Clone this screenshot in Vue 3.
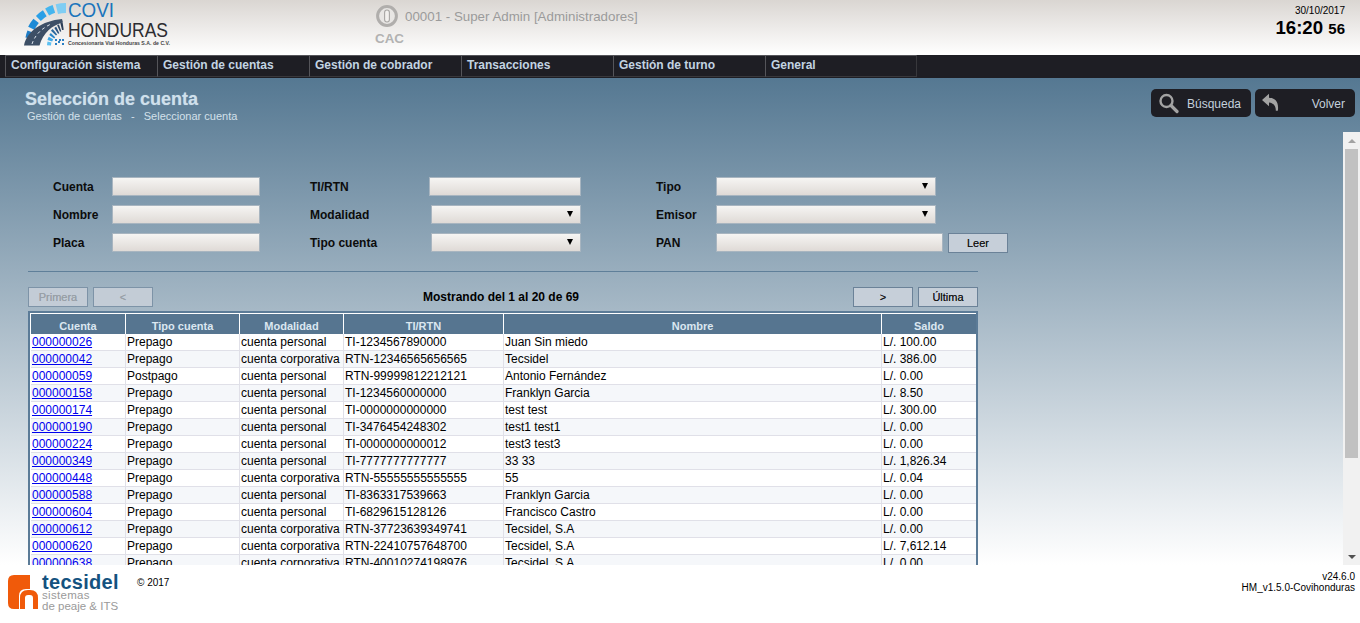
<script setup>
const menu = ['Configuración sistema', 'Gestión de cuentas', 'Gestión de cobrador', 'Transacciones', 'Gestión de turno', 'General']
const rows = [
  ['000000026', 'Prepago', 'cuenta personal', 'TI-1234567890000', 'Juan Sin miedo', 'L/. 100.00'],
  ['000000042', 'Prepago', 'cuenta corporativa', 'RTN-12346565656565', 'Tecsidel', 'L/. 386.00'],
  ['000000059', 'Postpago', 'cuenta personal', 'RTN-99999812212121', 'Antonio Fernández', 'L/. 0.00'],
  ['000000158', 'Prepago', 'cuenta personal', 'TI-1234560000000', 'Franklyn Garcia', 'L/. 8.50'],
  ['000000174', 'Prepago', 'cuenta personal', 'TI-0000000000000', 'test test', 'L/. 300.00'],
  ['000000190', 'Prepago', 'cuenta personal', 'TI-3476454248302', 'test1 test1', 'L/. 0.00'],
  ['000000224', 'Prepago', 'cuenta personal', 'TI-0000000000012', 'test3 test3', 'L/. 0.00'],
  ['000000349', 'Prepago', 'cuenta personal', 'TI-7777777777777', '33 33', 'L/. 1,826.34'],
  ['000000448', 'Prepago', 'cuenta corporativa', 'RTN-55555555555555', '55', 'L/. 0.04'],
  ['000000588', 'Prepago', 'cuenta personal', 'TI-8363317539663', 'Franklyn Garcia', 'L/. 0.00'],
  ['000000604', 'Prepago', 'cuenta personal', 'TI-6829615128126', 'Francisco Castro', 'L/. 0.00'],
  ['000000612', 'Prepago', 'cuenta corporativa', 'RTN-37723639349741', 'Tecsidel, S.A', 'L/. 0.00'],
  ['000000620', 'Prepago', 'cuenta corporativa', 'RTN-22410757648700', 'Tecsidel, S.A', 'L/. 7,612.14'],
  ['000000638', 'Prepago', 'cuenta corporativa', 'RTN-40010274198976', 'Tecsidel, S.A', 'L/. 0.00'],
]
const heads = ['Cuenta', 'Tipo cuenta', 'Modalidad', 'TI/RTN', 'Nombre', 'Saldo']
const widths = [95, 114, 104, 160, 378, 94]

const cx = 66, cy = 46
function arc(r, a0, a1) {
  const p = a => {
    const t = (a * Math.PI) / 180
    return `${(cx - r * Math.cos(t)).toFixed(1)} ${(cy - r * Math.sin(t)).toFixed(1)}`
  }
  return `M${p(a0)}A${r} ${r} 0 0 1 ${p(a1)}`
}
const outer = [
  { d: arc(40, 3, 6), w: 2, c: '#1f6fb5' },
  { d: arc(39, 12, 22), w: 5, c: '#1f7cc4' },
  { d: arc(39, 27, 40), w: 7, c: '#1d8ad6' },
  { d: arc(39, 45, 57), w: 7, c: '#2a9fe6' },
  { d: arc(39, 61, 72), w: 8, c: '#45b5ee' },
  { d: arc(38, 76, 90), w: 10, c: '#7fcdf3' },
]
const inner = [
  { d: arc(17, 2, 14), w: 4, c: '#5cc0f2' },
  { d: arc(17, 18, 28), w: 5, c: '#3fa9e8' },
  { d: arc(17, 33, 40), w: 6, c: '#2a86c8' },
  { d: arc(18, 46, 52), w: 7, c: '#2a6a9f' },
  { d: arc(18, 57, 63), w: 7, c: '#2b537f' },
  { d: arc(19, 67, 72), w: 7, c: '#2c4766' },
  { d: arc(20, 76, 82), w: 7, c: '#2c3f58' },
]
</script>

<template>
  <div class="page">
    <header class="top">
      <svg class="logo" width="180" height="55" viewBox="0 0 180 55">
        <path v-for="(s, i) in outer" :key="'o' + i" :d="s.d" :stroke="s.c" :stroke-width="s.w" fill="none" />
        <path d="M24 45.5C27 31 42 21 62 19L63 22.5C52 25 43 33 39.5 45.5Z" fill="#3d4f66" />
        <path d="M32 44C35 35 41 29 50 24.5" stroke="#dfe6ee" stroke-width="1" stroke-dasharray="3 3" fill="none" />
        <path v-for="(s, i) in inner" :key="'i' + i" :d="s.d" :stroke="s.c" :stroke-width="s.w" fill="none" />
        <g fill="#2a7fc4">
          <rect x="55" y="39" width="2" height="2" />
          <rect x="59" y="39" width="2" height="2" />
          <rect x="62" y="39" width="2" height="2" />
          <rect x="58" y="41" width="2" height="2" />
          <rect x="55" y="43" width="2" height="2" />
          <rect x="62" y="43" width="2" height="2" />
        </g>
        <text x="68" y="17" class="l-covi" textLength="46" lengthAdjust="spacingAndGlyphs">COVI</text>
        <text x="68" y="36.5" class="l-hond" textLength="100" lengthAdjust="spacingAndGlyphs">HONDURAS</text>
        <text x="68" y="44.5" class="l-sub" textLength="102" lengthAdjust="spacingAndGlyphs">Concesionaria Vial Honduras S.A. de C.V.</text>
      </svg>
      <div class="user">
        <div class="user-line">
          <svg width="22" height="22" viewBox="0 0 22 22">
            <circle cx="11" cy="11" r="9.4" fill="#e8e6e4" stroke="#b0aeac" stroke-width="3" />
            <rect x="8.6" y="5" width="4.8" height="12" rx="2.4" fill="#f2f0ee" stroke="#a8a6a4" stroke-width="1.1" />
          </svg>
          <span>00001 - Super Admin [Administradores]</span>
        </div>
        <div class="cac">CAC</div>
      </div>
      <div class="clock">
        <div class="date">30/10/2017</div>
        <div class="time">16:20 <small>56</small></div>
      </div>
    </header>

    <nav class="menu">
      <a v-for="m in menu" :key="m" class="menu-item">{{ m }}</a>
    </nav>

    <main class="main">
      <div class="title-row">
        <div>
          <h1>Selección de cuenta</h1>
          <p>Gestión de cuentas &nbsp;&nbsp;-&nbsp;&nbsp; Seleccionar cuenta</p>
        </div>
        <div class="actions">
          <button class="act">
            <svg width="22" height="22" viewBox="0 0 22 22" fill="none" stroke="#a3a3a3">
              <circle cx="9.5" cy="9" r="6" stroke-width="2.4" />
              <path d="M14 13.5L20 19.5" stroke-width="3.2" stroke-linecap="round" />
            </svg>
            <span>Búsqueda</span>
          </button>
          <button class="act">
            <svg width="20" height="20" viewBox="0 0 20 20">
              <path d="M1 7L8 .8V4.8C14 5 17.6 8.6 17 16.4L16.8 17.8L14.8 17.8C15 13 12.6 10 8 9.6V13.2Z" fill="#a3a3a3" />
            </svg>
            <span>Volver</span>
          </button>
        </div>
      </div>

      <div class="body">
        <div class="scroller">
          <form class="filters" @submit.prevent>
            <label>Cuenta</label><input type="text" class="w148" />
            <label>TI/RTN</label><input type="text" class="w152" />
            <label>Tipo</label><span class="sel w220"><select></select></span><i></i>

            <label>Nombre</label><input type="text" class="w148" />
            <label>Modalidad</label><span class="sel w150"><select></select></span>
            <label>Emisor</label><span class="sel w220"><select></select></span><i></i>

            <label>Placa</label><input type="text" class="w148" />
            <label>Tipo cuenta</label><span class="sel w150"><select></select></span>
            <label>PAN</label><input type="text" class="w227" /><button class="btn leer">Leer</button>
          </form>

          <hr class="rule" />

          <div class="pager">
            <div class="pager-side">
              <button class="btn off">Primera</button>
              <button class="btn off">&lt;</button>
            </div>
            <strong>Mostrando del 1 al 20 de 69</strong>
            <div class="pager-side">
              <button class="btn">&gt;</button>
              <button class="btn">Última</button>
            </div>
          </div>

          <div class="frame">
            <table>
              <colgroup><col v-for="(w, i) in widths" :key="i" :width="w" /></colgroup>
              <thead>
                <tr><th v-for="h in heads" :key="h">{{ h }}</th></tr>
              </thead>
              <tbody>
                <tr v-for="r in rows" :key="r[0]">
                  <td><a href="#">{{ r[0] }}</a></td>
                  <td v-for="(c, i) in r.slice(1)" :key="i">{{ c }}</td>
                </tr>
              </tbody>
            </table>
          </div>
        </div>
        <div class="sbar">
          <div class="sb-btn"><span class="tri-up"></span></div>
          <div class="sb-track"><div class="sb-thumb"></div></div>
          <div class="sb-btn"><span class="tri-down"></span></div>
        </div>
      </div>
    </main>

    <footer class="foot">
      <div class="brand">
        <svg width="32" height="36" viewBox="0 0 32 36">
          <path d="M7 1H23V15H19Q12 15 12 22V35H7Q1 35 1 29V7Q1 1 7 1Z" fill="#f05a0a" />
          <path d="M15.5 35V24Q15.500 18.500 21 18.500H23Q28.500 18.500 28.500 24V35" fill="none" stroke="#f05a0a" stroke-width="5" />
        </svg>
        <div class="brand-text">
          <b>tecsidel</b>
          <span class="s1">sistemas</span>
          <span>de peaje &amp; ITS</span>
        </div>
        <div class="copy">© 2017</div>
      </div>
      <div class="ver">
        <div>v24.6.0</div>
        <div>HM_v1.5.0-Covihonduras</div>
      </div>
    </footer>
  </div>
</template>

<style>
html, body { margin: 0; overflow: hidden; }
</style>

<style scoped>
* { box-sizing: border-box; }
.page {
  width: 1360px;
  height: 623px;
  display: flex;
  flex-direction: column;
  font-family: "Liberation Sans", Arial, sans-serif;
  font-size: 12px;
  color: #000;
  background: #fff;
}
.top {
  height: 55px;
  flex: none;
  display: flex;
  background: linear-gradient(to bottom, #dad6d2, #ffffff);
}
.logo { flex: none; }
.l-covi { font: 19.500px "Liberation Sans", sans-serif; fill: #1b75bc; }
.l-hond { font: 21px "Liberation Sans", sans-serif; fill: #2c2c30; }
.l-sub { font: bold 5.4px "Liberation Sans", sans-serif; fill: #444; }
.user { margin-left: 195px; padding-top: 5px; color: #9b9b9b; flex: 1; }
.user-line { display: flex; align-items: center; gap: 7px; height: 22px; margin-left: 1px; font-size: 13.33px; }
.cac { margin-top: 4px; font-size: 13.33px; font-weight: bold; color: #b2b2b2; }
.clock { padding: 5px 15px 0 0; text-align: right; color: #000; }
.date { font-size: 10px; line-height: 12px; }
.time { font-size: 18.67px; font-weight: bold; line-height: 22px; }
.time small { font-size: 15px; }

.menu {
  height: 23px;
  flex: none;
  display: flex;
  padding-left: 5px;
  background: #1e1e24;
}
.menu-item {
  width: 152px;
  height: 22px;
  padding-left: 5px;
  border-top: 1px solid #55555a;
  border-left: 1px solid #55555a;
  border-bottom: 1px solid #38383c;
  font-weight: bold;
  font-size: 12px;
  line-height: 18px;
  color: #c3d4e2;
}
.menu-item:last-child { border-right: 1px solid #38383c; }

.main {
  flex: 1;
  min-height: 0;
  display: flex;
  flex-direction: column;
  background: linear-gradient(to bottom, #557892, #ffffff);
}
.title-row {
  height: 54px;
  flex: none;
  display: flex;
  justify-content: space-between;
  padding: 11px 5px 0 25px;
}
h1 {
  margin: 0;
  font-size: 18px;
  line-height: 20px;
  color: #cfe0ec;
  text-shadow: 0 0 1px rgba(207, 224, 236, .5);
}
.title-row p {
  margin: 1px 0 0 2px;
  font-size: 11px;
  line-height: 13px;
  color: #d3e0ea;
}
.actions { display: flex; gap: 4px; }
.act {
  width: 100px;
  height: 28px;
  display: flex;
  align-items: center;
  justify-content: space-between;
  padding: 0 10px 0 6px;
  border: none;
  border-radius: 5px;
  background: #1e1e24;
  color: #c4d0dc;
  font: 12px "Liberation Sans", sans-serif;
}
.act span { padding-top: 2px; }

.body {
  flex: 1;
  min-height: 0;
  display: flex;
}
.scroller {
  flex: 1;
  min-width: 0;
  overflow: hidden;
  padding: 45px 0 0 28px;
}
.sbar {
  width: 17px;
  flex: none;
  display: flex;
  flex-direction: column;
  background: #f1f1f1;
}
.sb-btn {
  height: 17px;
  flex: none;
  display: flex;
  align-items: center;
  justify-content: center;
}
.sb-track { flex: 1; padding: 0 2px; }
.sb-thumb { height: 309px; background: #c1c1c1; }
.tri-up {
  border-left: 4px solid transparent;
  border-right: 4px solid transparent;
  border-bottom: 4px solid #a3a3a3;
}
.tri-down {
  border-left: 4px solid transparent;
  border-right: 4px solid transparent;
  border-top: 4px solid #505050;
}

.filters {
  display: grid;
  grid-template-columns: 59px 198px 119px 227px 60px 227px 65px;
  grid-auto-rows: 19px;
  row-gap: 9px;
  align-items: center;
  padding-left: 25px;
  width: 1000px;
}
label { font-weight: bold; font-size: 12px; color: #0c0c0c; }
input, select {
  height: 19px;
  margin: 0;
  padding: 0 2px;
  display: block;
  border: 1px solid #a8b5c0;
  border-radius: 0;
  background: linear-gradient(to bottom, #f6f5f3, #dfdad6);
  appearance: none;
  font: 12px "Liberation Sans", sans-serif;
}
.w148 { width: 148px; }
.w152 { width: 152px; }
.w227 { width: 227px; }
.sel { position: relative; display: block; height: 19px; }
.sel select { width: 100%; }
.sel::after {
  content: "";
  position: absolute;
  right: 8px;
  top: 6px;
  border-left: 3px solid transparent;
  border-right: 3px solid transparent;
  border-top: 6px solid #000;
}
.w150 { width: 150px; margin-left: 2px; }
.w220 { width: 220px; }
.btn {
  width: 60px;
  height: 20px;
  padding: 0;
  border: 1px solid #6b8298;
  border-radius: 0;
  background: #c6cfd9;
  color: #111;
  font: 11px "Liberation Sans", sans-serif;
  text-shadow: 0 0 .6px rgba(0, 0, 0, .6);
}
.btn.off { color: #9aa1a8; background: #c3ccd6; border-color: #7d93a7; text-shadow: 0 0 .6px rgba(120, 128, 136, .7); }
.leer { margin-left: 5px; }

.rule {
  width: 950px;
  height: 1px;
  margin: 19px 0 15px;
  border: none;
  background: #5f7f99;
}
.pager {
  width: 950px;
  height: 20px;
  display: flex;
  justify-content: space-between;
  align-items: center;
}
.pager strong { font-size: 12px; margin-left: -4px; }
.pager-side { display: flex; gap: 5px; }

.frame {
  width: 950px;
  margin-top: 4px;
  border: 2px solid #5b7b97;
  background: #fff;
}
table {
  width: 946px;
  table-layout: fixed;
  border-collapse: separate;
  border-spacing: 0;
  border-left: 1px solid #fff;
  border-top: 1px solid #fff;
}
th {
  height: 20px;
  padding: 4px 0 0;
  background: #567590;
  color: #dbe7f0;
  font-size: 11px;
  font-weight: bold;
  text-align: center;
  border-right: 1px solid #fff;
}
td {
  height: 17px;
  padding: 0 0 0 1px;
  font-size: 12px;
  line-height: 16px;
  white-space: nowrap;
  overflow: hidden;
  border-right: 1px solid #e0e0e8;
  border-bottom: 1px solid #e0e0e8;
}
th:last-child, td:last-child { border-right: none; }
tbody tr:nth-child(even) td { background: #f5f7fa; }
td a { color: #0000ee; }

.foot {
  height: 58px;
  flex: none;
  display: flex;
  justify-content: space-between;
  background: #fff;
}
.brand { display: flex; padding: 9px 0 0 7px; }
.brand svg { flex: none; }
.brand-text { display: flex; flex-direction: column; margin-left: 3px; color: #9a9a9a; }
.brand-text b {
  font-size: 20px;
  line-height: 16px;
  color: #14527f;
  letter-spacing: .3px;
  width: 77px;
  white-space: nowrap;
}
.brand-text span { font-size: 11.5px; line-height: 11px; white-space: nowrap; }
.brand-text .s1 { letter-spacing: .3px; }
.copy { margin: 3px 0 0 18px; font-size: 10px; line-height: 12px; }
.ver {
  padding: 6px 5px 0 0;
  text-align: right;
  font-size: 10px;
  line-height: 11px;
}
</style>
